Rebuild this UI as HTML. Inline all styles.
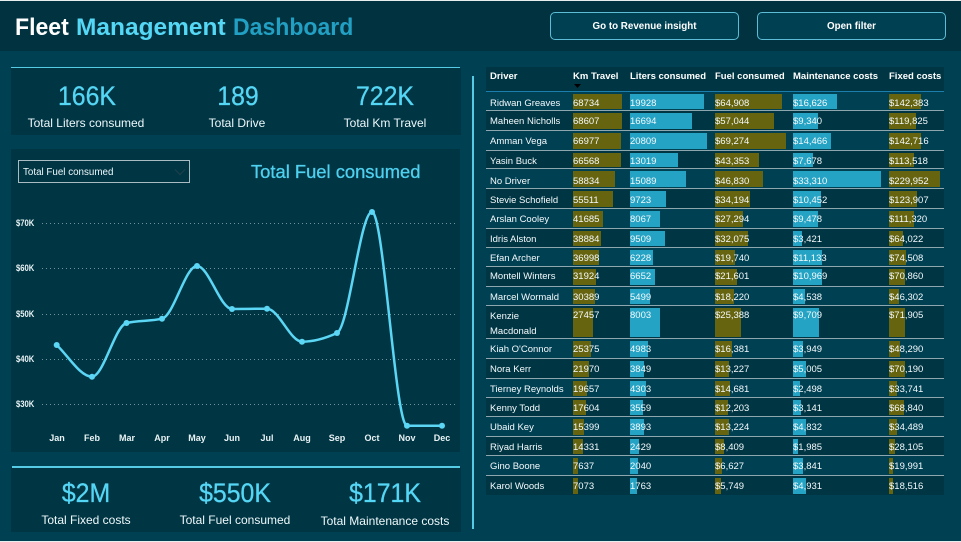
<!DOCTYPE html>
<html><head><meta charset="utf-8"><style>
html,body{margin:0;padding:0}
body{width:961px;height:542px;position:relative;overflow:hidden;background:#004053;font-family:"Liberation Sans",sans-serif;color:#fff}
div,span,svg{position:absolute}
.hd{left:0;top:1px;width:961px;height:50px;background:#00323f}
.title{top:13px;font-size:24px;font-weight:bold;line-height:30px;white-space:nowrap;transform-origin:0 0}
.btn{top:12px;width:187px;height:26px;border:1px solid #5dbcd6;border-radius:5px;background:#004053;text-align:center;font-size:9.8px;font-weight:bold;line-height:27px}
.p{background:#003644}
.ln{background:#55cbe6}
.v{color:#55d6f5;font-size:27px;line-height:30px;text-align:center;width:150px;transform:scaleX(.92);-webkit-text-stroke:.3px #55d6f5}
.t{font-size:12px;line-height:16px;text-align:center;width:180px;color:#eef8fb;white-space:nowrap}
.yl{left:16px;font-size:9px;line-height:12px;font-weight:bold;color:#e8f2f4;transform:scaleX(.85);transform-origin:0 0}
.mo{top:432px;width:36px;text-align:center;font-size:9px;line-height:12px;font-weight:bold;color:#e8f2f4}
.g{left:42px;width:414px;height:1px;background:repeating-linear-gradient(90deg,#6f929b 0,#6f929b 1px,transparent 1px,transparent 4px)}
.r{left:486px;width:458px;font-size:9.5px;color:#f4fafc;box-sizing:border-box;border-bottom:1px solid #8ea7ae;background:#004053}
.r.d{background:#003644}
.c{top:0;height:100%;white-space:nowrap;box-sizing:border-box;padding-top:var(--p,4px);line-height:14px}
.c i{position:absolute;left:0;top:2px;bottom:1px;background:#66640f;z-index:0}
.c.b i{background:#25a3c4}
.c em{position:relative;font-style:normal;z-index:1}
.a0{left:4px}.a1{left:87px}.a2{left:144px}.a3{left:229px}.a4{left:307px}.a5{left:403px}
.h{top:71px;font-size:9.5px;font-weight:bold;line-height:12px;white-space:nowrap}
</style></head><body>
<div style="left:0;top:0;width:961px;height:1px;background:#e8eeee"></div>
<div style="left:0;top:541px;width:961px;height:1px;background:#e8eeee"></div>
<div class="hd"></div>
<div class="title" style="left:15px;transform:scaleX(.96)">Fleet</div>
<div class="title" style="left:76px;color:#55d8f5;transform:scaleX(1.02)">Management</div>
<div class="title" style="left:233px;color:#22a0c4;transform:scaleX(.96)">Dashboard</div>
<div class="btn" style="left:550px">Go to Revenue insight</div>
<div class="btn" style="left:757px">Open filter</div>

<div class="p" style="left:11px;top:68px;width:450px;height:67px"></div>
<div class="ln" style="left:11px;top:67px;width:449px;height:1px"></div>
<div class="v" style="left:12px;top:81px">166K</div>
<div class="v" style="left:163px;top:81px">189</div>
<div class="v" style="left:310px;top:81px">722K</div>
<div class="t" style="left:-4px;top:115px">Total Liters consumed</div>
<div class="t" style="left:147px;top:115px">Total Drive</div>
<div class="t" style="left:295px;top:115px">Total Km Travel</div>

<div class="p" style="left:11px;top:149px;width:449px;height:303px"></div>
<div style="left:18px;top:160px;width:170px;height:21px;border:1px solid #a9bcc2;box-sizing:content-box"></div>
<div style="left:23px;top:167px;font-size:9.8px;line-height:12px;color:#eef8fb;white-space:nowrap">Total Fuel consumed</div>
<svg style="left:174px;top:168px" width="12" height="8" viewBox="0 0 12 8"><path d="M1 1.5L6 6.5L11 1.5" fill="none" stroke="#1f3f49" stroke-width="1"/></svg>
<div style="left:251px;top:161px;font-size:18px;line-height:22px;color:#4fd0ef;white-space:nowrap;-webkit-text-stroke:.3px #4fd0ef;transform:scaleX(1.02);transform-origin:0 0">Total Fuel consumed</div>

<div class="g" style="top:223px"></div>
<div class="g" style="top:268px"></div>
<div class="g" style="top:314px"></div>
<div class="g" style="top:359px"></div>
<div class="g" style="top:404px"></div>
<div class="yl" style="top:217px">$70K</div>
<div class="yl" style="top:262px">$60K</div>
<div class="yl" style="top:308px">$50K</div>
<div class="yl" style="top:353px">$40K</div>
<div class="yl" style="top:398px">$30K</div>
<svg style="left:0;top:0" width="480" height="460" viewBox="0 0 480 460">
<path d="M56.7 345C68.3 356 80.3 376.7 92 376.7C103.5 376.7 115 325.7 126.5 323C138 320.3 150 321.4 162 318.7C173.7 316 185.3 266 197 266C208.7 266 220.3 309 232 309C243.7 309 255.3 308.7 267 308.7C278.7 308.7 290.3 341.7 302 341.7C313.7 341.7 325.3 338.4 337 333C348.7 327.6 360.3 212 372 212C383.7 212 395.3 425.7 407 425.7L442 425.7" fill="none" stroke="#5bd6f5" stroke-width="2.5"/>
<g fill="#5bd6f5"><circle cx="56.7" cy="345" r="3"/><circle cx="92" cy="376.7" r="3"/><circle cx="126.5" cy="323" r="3"/><circle cx="162" cy="318.7" r="3"/><circle cx="197" cy="266" r="3"/><circle cx="232" cy="309" r="3"/><circle cx="267" cy="308.7" r="3"/><circle cx="302" cy="341.7" r="3"/><circle cx="337" cy="333" r="3"/><circle cx="372" cy="212" r="3"/><circle cx="407" cy="425.7" r="3"/><circle cx="442" cy="425.7" r="3"/></g>
</svg>
<div class="mo" style="left:39px">Jan</div><div class="mo" style="left:74px">Feb</div><div class="mo" style="left:109px">Mar</div><div class="mo" style="left:144px">Apr</div><div class="mo" style="left:179px">May</div><div class="mo" style="left:214px">Jun</div><div class="mo" style="left:249px">Jul</div><div class="mo" style="left:284px">Aug</div><div class="mo" style="left:319px">Sep</div><div class="mo" style="left:354px">Oct</div><div class="mo" style="left:389px">Nov</div><div class="mo" style="left:424px">Dec</div>

<div class="p" style="left:11px;top:467px;width:450px;height:65px"></div>
<div class="ln" style="left:12px;top:466px;width:448px;height:2px"></div>
<div class="v" style="left:11px;top:478px">$2M</div>
<div class="v" style="left:160px;top:478px">$550K</div>
<div class="v" style="left:310px;top:478px">$171K</div>
<div class="t" style="left:-4px;top:512px">Total Fixed costs</div>
<div class="t" style="left:145px;top:512px">Total Fuel consumed</div>
<div class="t" style="left:295px;top:513px">Total Maintenance costs</div>

<div class="ln" style="left:472px;top:76px;width:2px;height:453px"></div>

<div style="left:486px;top:67px;width:458px;height:24px;background:#003644;border-bottom:1px solid #1b7fae"></div>
<div class="h" style="left:490px">Driver</div>
<div class="h" style="left:573px">Km Travel</div>
<div class="h" style="left:630px">Liters consumed</div>
<div class="h" style="left:715px">Fuel consumed</div>
<div class="h" style="left:793px">Maintenance costs</div>
<div class="h" style="left:889px">Fixed costs</div>
<svg style="left:574px;top:84px" width="7" height="4" viewBox="0 0 7 4"><path d="M0 0H7L3.5 4Z" fill="#000"/></svg>

<div class="r" style="top:92px;height:19px;--p:5px"><div class="c a0"><em>Ridwan Greaves</em></div><div class="c a1"><i style="width:49px"></i><em>68734</em></div><div class="c a2 b"><i style="width:73.7px"></i><em>19928</em></div><div class="c a3"><i style="width:66.5px"></i><em>$64,908</em></div><div class="c a4 b"><i style="width:43.9px"></i><em>$16,626</em></div><div class="c a5"><i style="width:31.6px"></i><em>$142,383</em></div></div>
<div class="r d" style="top:111px;height:20px"><div class="c a0"><em>Maheen Nicholls</em></div><div class="c a1"><i style="width:49px"></i><em>68607</em></div><div class="c a2 b"><i style="width:61.8px"></i><em>16694</em></div><div class="c a3"><i style="width:58.5px"></i><em>$57,044</em></div><div class="c a4 b"><i style="width:24.7px"></i><em>$9,340</em></div><div class="c a5"><i style="width:26.6px"></i><em>$119,825</em></div></div>
<div class="r" style="top:131px;height:20px"><div class="c a0"><em>Amman Vega</em></div><div class="c a1"><i style="width:47.7px"></i><em>66977</em></div><div class="c a2 b"><i style="width:77px"></i><em>20809</em></div><div class="c a3"><i style="width:71px"></i><em>$69,274</em></div><div class="c a4 b"><i style="width:38.2px"></i><em>$14,466</em></div><div class="c a5"><i style="width:31.7px"></i><em>$142,716</em></div></div>
<div class="r d" style="top:151px;height:18px"><div class="c a0"><em>Yasin Buck</em></div><div class="c a1"><i style="width:47.5px"></i><em>66568</em></div><div class="c a2 b"><i style="width:48.2px"></i><em>13019</em></div><div class="c a3"><i style="width:44.4px"></i><em>$43,353</em></div><div class="c a4 b"><i style="width:20.3px"></i><em>$7,678</em></div><div class="c a5"><i style="width:25.2px"></i><em>$113,518</em></div></div>
<div class="r" style="top:169px;height:20px;--p:6px"><div class="c a0"><em>No Driver</em></div><div class="c a1"><i style="width:42px"></i><em>58834</em></div><div class="c a2 b"><i style="width:55.8px"></i><em>15089</em></div><div class="c a3"><i style="width:48px"></i><em>$46,830</em></div><div class="c a4 b"><i style="width:88px"></i><em>$33,310</em></div><div class="c a5"><i style="width:51px"></i><em>$229,952</em></div></div>
<div class="r d" style="top:189px;height:20px;--p:5px"><div class="c a0"><em>Stevie Schofield</em></div><div class="c a1"><i style="width:39.6px"></i><em>55511</em></div><div class="c a2 b"><i style="width:36px"></i><em>9723</em></div><div class="c a3"><i style="width:35px"></i><em>$34,194</em></div><div class="c a4 b"><i style="width:27.6px"></i><em>$10,452</em></div><div class="c a5"><i style="width:27.5px"></i><em>$123,907</em></div></div>
<div class="r" style="top:209px;height:20px"><div class="c a0"><em>Arslan Cooley</em></div><div class="c a1"><i style="width:29.7px"></i><em>41685</em></div><div class="c a2 b"><i style="width:29.8px"></i><em>8067</em></div><div class="c a3"><i style="width:28px"></i><em>$27,294</em></div><div class="c a4 b"><i style="width:25px"></i><em>$9,478</em></div><div class="c a5"><i style="width:24.7px"></i><em>$111,320</em></div></div>
<div class="r d" style="top:229px;height:19px"><div class="c a0"><em>Idris Alston</em></div><div class="c a1"><i style="width:27.7px"></i><em>38884</em></div><div class="c a2 b"><i style="width:35.2px"></i><em>9509</em></div><div class="c a3"><i style="width:32.9px"></i><em>$32,075</em></div><div class="c a4 b"><i style="width:9px"></i><em>$3,421</em></div><div class="c a5"><i style="width:14.2px"></i><em>$64,022</em></div></div>
<div class="r" style="top:248px;height:19px"><div class="c a0"><em>Efan Archer</em></div><div class="c a1"><i style="width:26.4px"></i><em>36998</em></div><div class="c a2 b"><i style="width:23px"></i><em>6228</em></div><div class="c a3"><i style="width:20.2px"></i><em>$19,740</em></div><div class="c a4 b"><i style="width:29.4px"></i><em>$11,133</em></div><div class="c a5"><i style="width:16.5px"></i><em>$74,508</em></div></div>
<div class="r d" style="top:267px;height:20px;--p:3px"><div class="c a0"><em>Montell Winters</em></div><div class="c a1"><i style="width:22.8px"></i><em>31924</em></div><div class="c a2 b"><i style="width:24.6px"></i><em>6652</em></div><div class="c a3"><i style="width:22.1px"></i><em>$21,601</em></div><div class="c a4 b"><i style="width:29px"></i><em>$10,969</em></div><div class="c a5"><i style="width:15.7px"></i><em>$70,860</em></div></div>
<div class="r" style="top:287px;height:19px"><div class="c a0"><em>Marcel Wormald</em></div><div class="c a1"><i style="width:21.7px"></i><em>30389</em></div><div class="c a2 b"><i style="width:20.3px"></i><em>5499</em></div><div class="c a3"><i style="width:18.7px"></i><em>$18,220</em></div><div class="c a4 b"><i style="width:12px"></i><em>$4,538</em></div><div class="c a5"><i style="width:10.3px"></i><em>$46,302</em></div></div>
<div class="r d" style="top:306px;height:33px;--p:3px"><div class="c a0"><em style="line-height:15px;display:block">Kenzie<br>Macdonald</em></div><div class="c a1"><i style="width:19.6px"></i><em>27457</em></div><div class="c a2 b"><i style="width:29.6px"></i><em>8003</em></div><div class="c a3"><i style="width:26px"></i><em>$25,388</em></div><div class="c a4 b"><i style="width:25.7px"></i><em>$9,709</em></div><div class="c a5"><i style="width:16px"></i><em>$71,905</em></div></div>
<div class="r" style="top:339px;height:20px"><div class="c a0"><em>Kiah O'Connor</em></div><div class="c a1"><i style="width:18.1px"></i><em>25375</em></div><div class="c a2 b"><i style="width:18.4px"></i><em>4983</em></div><div class="c a3"><i style="width:16.8px"></i><em>$16,381</em></div><div class="c a4 b"><i style="width:10.4px"></i><em>$3,949</em></div><div class="c a5"><i style="width:10.7px"></i><em>$48,290</em></div></div>
<div class="r d" style="top:359px;height:20px"><div class="c a0"><em>Nora Kerr</em></div><div class="c a1"><i style="width:15.7px"></i><em>21970</em></div><div class="c a2 b"><i style="width:14.2px"></i><em>3849</em></div><div class="c a3"><i style="width:13.6px"></i><em>$13,227</em></div><div class="c a4 b"><i style="width:13.2px"></i><em>$5,005</em></div><div class="c a5"><i style="width:15.6px"></i><em>$70,190</em></div></div>
<div class="r" style="top:379px;height:19px"><div class="c a0"><em>Tierney Reynolds</em></div><div class="c a1"><i style="width:14px"></i><em>19657</em></div><div class="c a2 b"><i style="width:15.9px"></i><em>4303</em></div><div class="c a3"><i style="width:15px"></i><em>$14,681</em></div><div class="c a4 b"><i style="width:6.6px"></i><em>$2,498</em></div><div class="c a5"><i style="width:7.5px"></i><em>$33,741</em></div></div>
<div class="r d" style="top:398px;height:19px"><div class="c a0"><em>Kenny Todd</em></div><div class="c a1"><i style="width:12.6px"></i><em>17604</em></div><div class="c a2 b"><i style="width:13.2px"></i><em>3559</em></div><div class="c a3"><i style="width:12.5px"></i><em>$12,203</em></div><div class="c a4 b"><i style="width:8.3px"></i><em>$3,141</em></div><div class="c a5"><i style="width:15.3px"></i><em>$68,840</em></div></div>
<div class="r" style="top:417px;height:20px"><div class="c a0"><em>Ubaid Key</em></div><div class="c a1"><i style="width:11px"></i><em>15399</em></div><div class="c a2 b"><i style="width:14.4px"></i><em>3893</em></div><div class="c a3"><i style="width:13.6px"></i><em>$13,224</em></div><div class="c a4 b"><i style="width:12.8px"></i><em>$4,832</em></div><div class="c a5"><i style="width:7.6px"></i><em>$34,489</em></div></div>
<div class="r d" style="top:437px;height:19px;--p:4px"><div class="c a0"><em>Riyad Harris</em></div><div class="c a1"><i style="width:10.2px"></i><em>14331</em></div><div class="c a2 b"><i style="width:9px"></i><em>2429</em></div><div class="c a3"><i style="width:8.6px"></i><em>$8,409</em></div><div class="c a4 b"><i style="width:5.2px"></i><em>$1,985</em></div><div class="c a5"><i style="width:6.2px"></i><em>$28,105</em></div></div>
<div class="r" style="top:456px;height:20px"><div class="c a0"><em>Gino Boone</em></div><div class="c a1"><i style="width:5.4px"></i><em>7637</em></div><div class="c a2 b"><i style="width:7.5px"></i><em>2040</em></div><div class="c a3"><i style="width:6.8px"></i><em>$6,627</em></div><div class="c a4 b"><i style="width:10.1px"></i><em>$3,841</em></div><div class="c a5"><i style="width:4.4px"></i><em>$19,991</em></div></div>
<div class="r d" style="top:476px;height:19px;border-bottom:0"><div class="c a0"><em>Karol Woods</em></div><div class="c a1"><i style="width:5px"></i><em>7073</em></div><div class="c a2 b"><i style="width:6.5px"></i><em>1763</em></div><div class="c a3"><i style="width:5.9px"></i><em>$5,749</em></div><div class="c a4 b"><i style="width:13px"></i><em>$4,931</em></div><div class="c a5"><i style="width:4.1px"></i><em>$18,516</em></div></div>
</body></html>
